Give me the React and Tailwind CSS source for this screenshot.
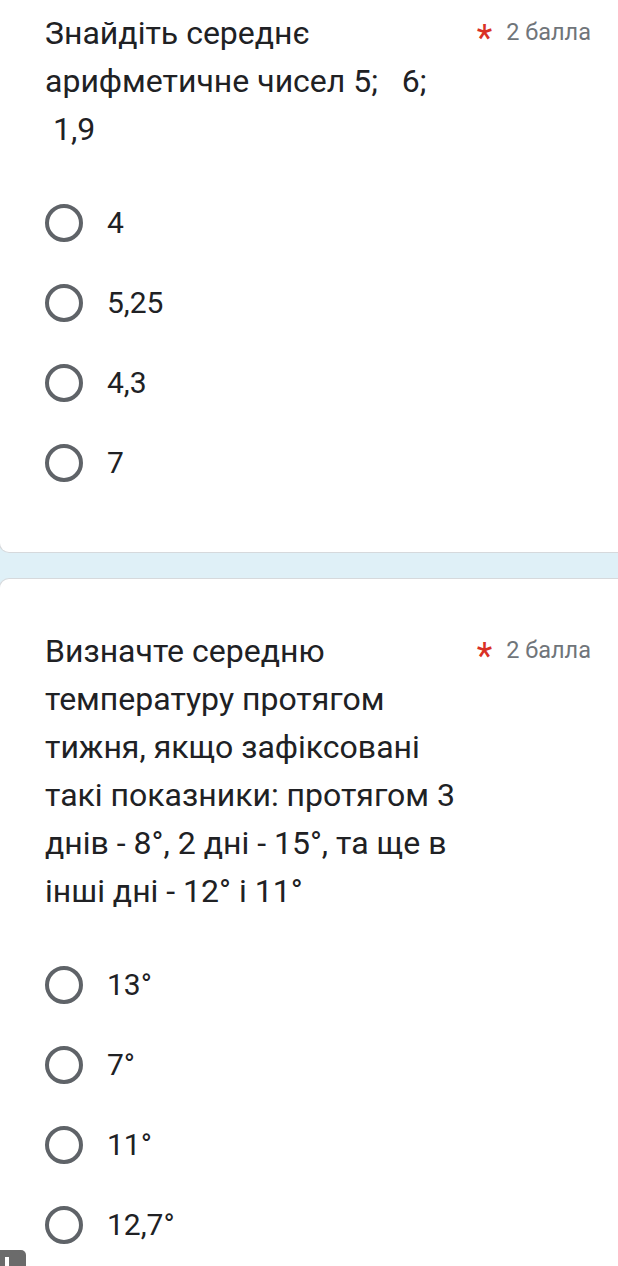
import React from "react";

const font = { fontFamily: "Roboto, 'Noto Sans', sans-serif" };

function Radio({ label }) {
  return (
    <div className="flex h-[80px] items-center">
      <div className="ml-[45px] h-[38px] w-[38px] shrink-0 rounded-full border-[4px] border-[#5f6368]" />
      <span className="ml-[24px] text-[30px] leading-none text-[#202124]">{label}</span>
    </div>
  );
}

function Header({ lines }) {
  return (
    <div className="flex items-start pl-[45px] pr-[46px]">
      <div className="flex-1 whitespace-pre-wrap text-[32px] leading-[48px] text-[#202124]">
        {lines.map((l, i) => (
          <div key={i}>{l}</div>
        ))}
      </div>
      <div className="flex h-[48px] items-center">
        <span className="mr-[14px] mt-[9px] text-[36px] leading-none text-[#d93025]">*</span>
        <span className="text-[23.5px] text-[#70757a]">2 балла</span>
      </div>
    </div>
  );
}

export default function App() {
  return (
    <div style={font} className="relative h-[1266px] w-[618px] overflow-hidden bg-[#dff0f7]">
      <div className="ml-[-1px] mr-[-20px] rounded-b-[10px] border border-t-0 border-[#d6d9dc] bg-white pt-[9px] pb-[49px]">
        <Header lines={["Знайдіть середнє", "арифметичне чисел 5;   6;", " 1,9"]} />
        <div className="mt-[30px]">
          {["4", "5,25", "4,3", "7"].map((o) => (
            <Radio key={o} label={o} />
          ))}
        </div>
      </div>
      <div className="mt-[25px] ml-[-1px] mr-[-20px] rounded-t-[10px] border border-b-0 border-[#d6d9dc] bg-white pt-[48px] pb-[80px]">
        <Header
          lines={[
            "Визначте середню",
            "температуру протягом",
            "тижня, якщо зафіксовані",
            "такі показники: протягом 3",
            "днів - 8°, 2 дні - 15°, та ще в",
            "інші дні - 12° і 11°",
          ]}
        />
        <div className="mt-[30px]">
          {["13°", "7°", "11°", "12,7°"].map((o) => (
            <Radio key={o} label={o} />
          ))}
        </div>
      </div>
      <div className="absolute bottom-0 left-0 flex h-[16px] w-[26px] items-end rounded-tr-[5px] bg-[#6b6b6b] pl-[5px]">
        <div className="h-[9px] w-[4px] bg-white" />
      </div>
    </div>
  );
}
